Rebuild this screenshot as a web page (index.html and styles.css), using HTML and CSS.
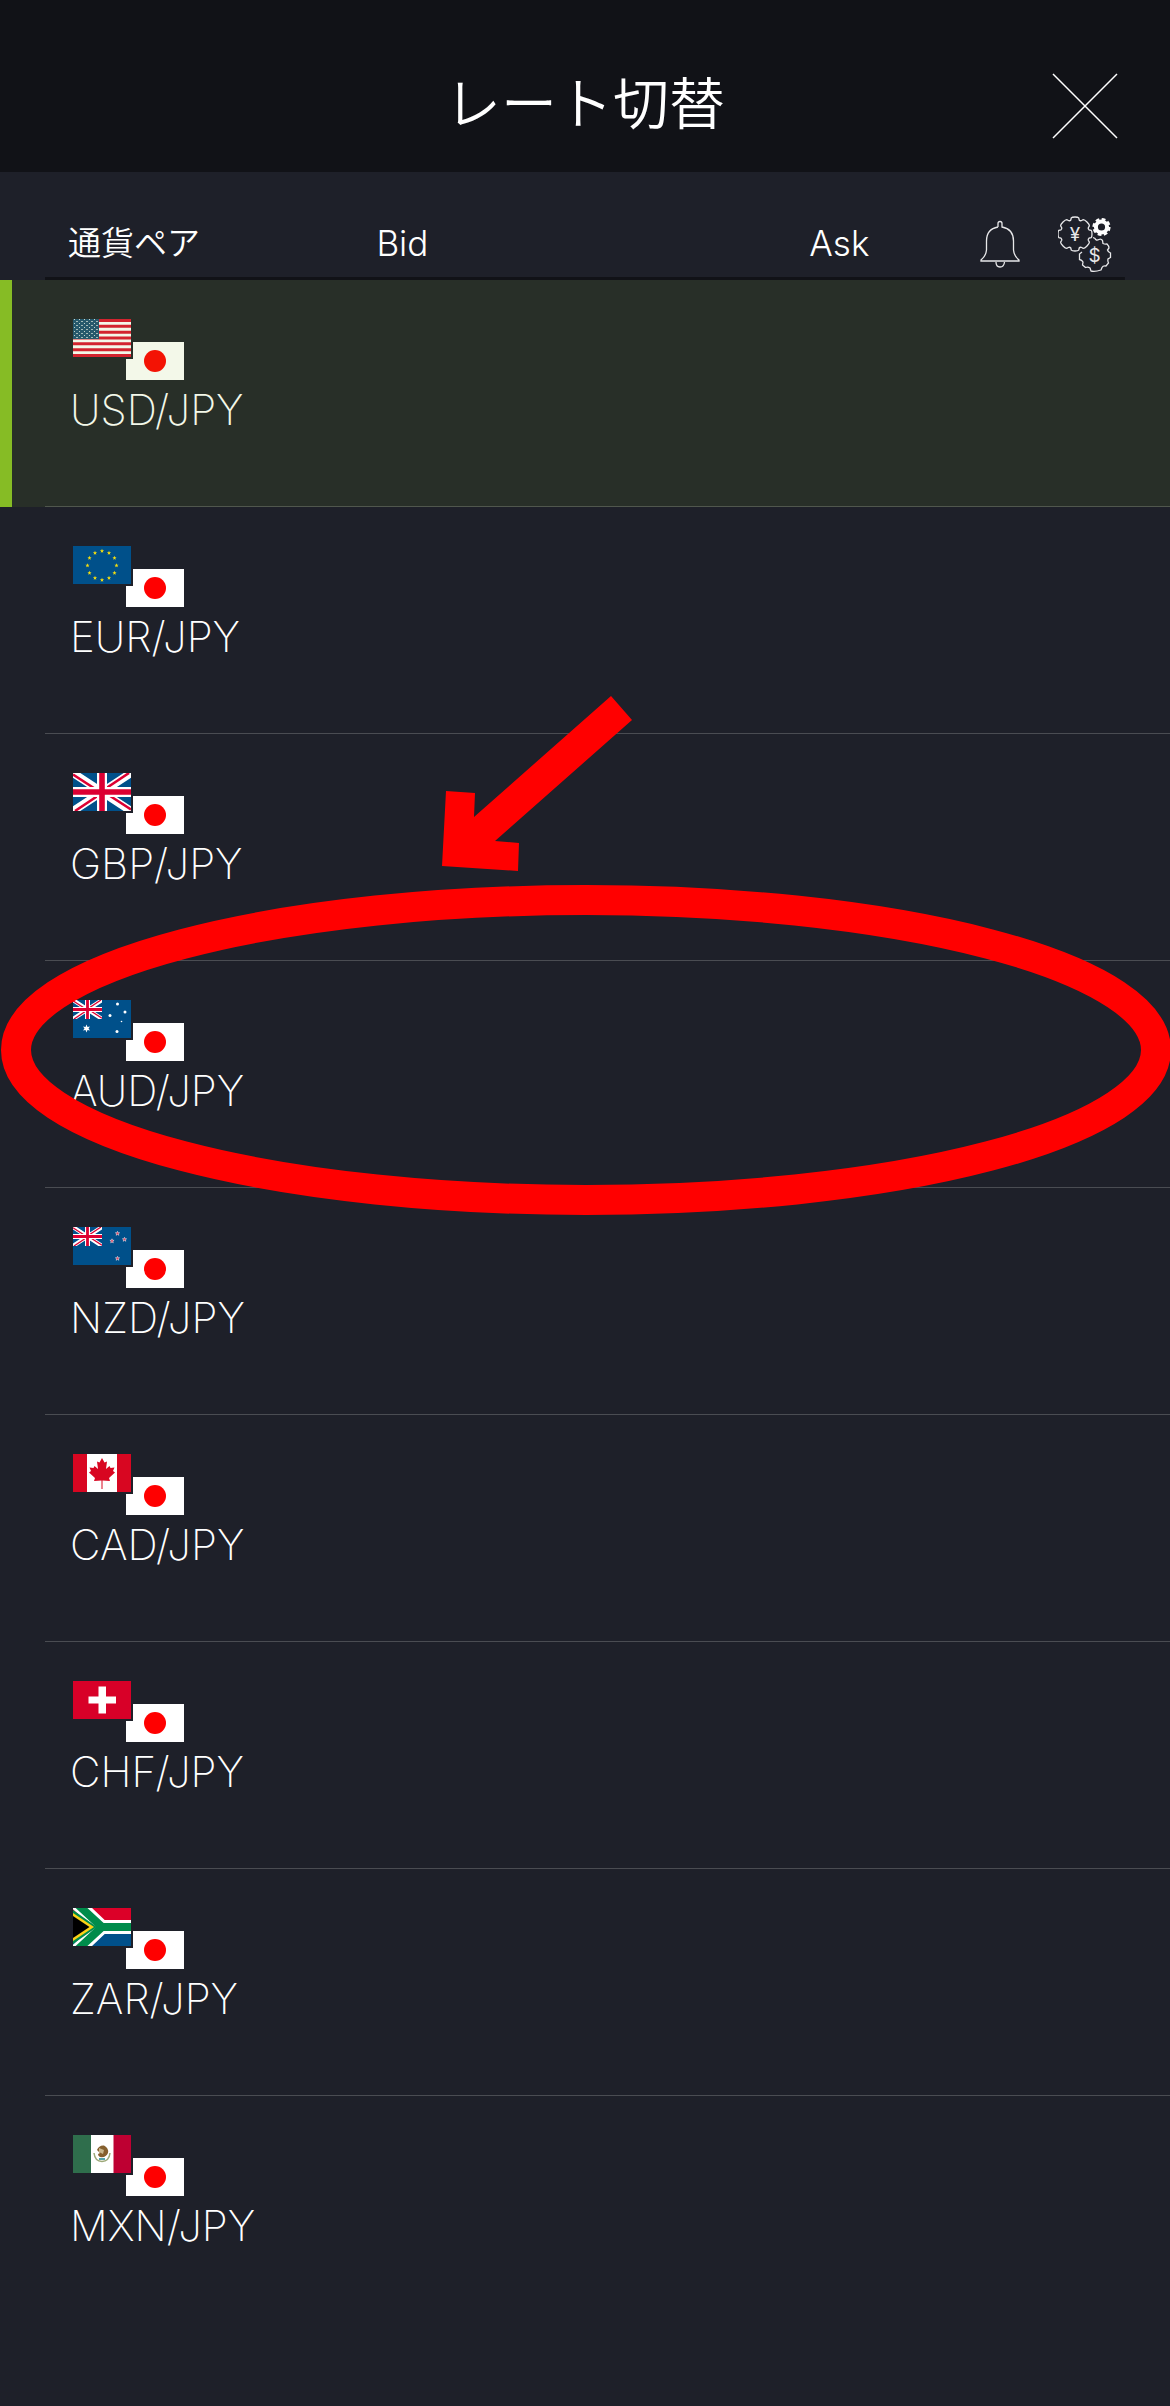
FILE: index.html
```html
<!DOCTYPE html>
<html lang="ja">
<head>
<meta charset="utf-8">
<meta name="viewport" content="width=device-width, initial-scale=1">
<title>レート切替</title>
<link rel="stylesheet" href="styles.css">
</head>
<body>
<svg class="defs" aria-hidden="true">
  <defs>
    <symbol id="jp" viewBox="0 0 58 38"><rect width="58" height="38" fill="#fff"/><circle cx="29" cy="19" r="11" fill="#f00"/></symbol>
    <pattern id="stars" width="5" height="4" patternUnits="userSpaceOnUse"><rect width="5" height="4" fill="#1c4f74"/><rect x="1" y="0" width="1" height="1" fill="#c9d6df"/><rect x="3" y="2" width="2" height="1" fill="#a9bcc9"/></pattern>
    <symbol id="us" viewBox="0 0 58 38">
      <rect width="58" height="38" fill="#fff"/>
      <path d="M0 1.5H58M0 7.3H58M0 13.2H58M0 19H58M0 24.8H58M0 30.7H58M0 36.5H58" stroke="#dc1430" stroke-width="2.9"/>
      <rect width="26" height="20" fill="url(#stars)"/>
    </symbol>
    <path id="star" d="M0-2.2L.6-.7 2.1-.7.9.3 1.3 1.8 0 .9-1.3 1.8-.9.3-2.1-.7-.6-.7Z"/>
    <symbol id="eu" viewBox="0 0 58 38">
      <rect width="58" height="38" fill="#00508a"/>
      <g fill="#f2dc10">
        <use href="#star" x="29" y="5"/><use href="#star" x="36" y="7"/><use href="#star" x="41.500" y="12"/><use href="#star" x="43.500" y="19.500"/><use href="#star" x="41.500" y="27"/><use href="#star" x="36" y="32"/><use href="#star" x="29" y="34"/><use href="#star" x="22" y="32"/><use href="#star" x="16.500" y="27"/><use href="#star" x="14.500" y="19.500"/><use href="#star" x="16.500" y="12"/><use href="#star" x="22" y="7"/>
      </g>
    </symbol>
    <symbol id="gb" viewBox="0 0 58 38">
      <rect width="58" height="38" fill="#00508a"/>
      <path d="M0 0L58 38M58 0L0 38" stroke="#fff" stroke-width="8"/>
      <path d="M0 1.500L27 19M58 36.500L31 19M56 0L29 18M2 38L29 20" stroke="#dc0032" stroke-width="2.600"/>
      <path d="M29 0V38M0 19H58" stroke="#fff" stroke-width="10"/>
      <path d="M29 0V38M0 19H58" stroke="#dc0032" stroke-width="5.600"/>
    </symbol>
    <symbol id="au" viewBox="0 0 58 38">
      <rect width="58" height="38" fill="#00508a"/><use href="#gb" width="29" height="19"/>
      <path d="M13.500 24.500L14.500 27 17 26.500 15.500 28.500 17 30.500 14.500 30 13.500 32.500 12.500 30 10 30.500 11.500 28.500 10 26.500 12.500 27Z" fill="#fff"/>
      <g fill="#fff"><circle cx="44.500" cy="4" r="1.500"/><circle cx="37" cy="15.500" r="1.500"/><circle cx="52" cy="12" r="1.500"/><circle cx="48.500" cy="21.500" r=".8"/><circle cx="44" cy="31.500" r="1.500"/></g>
    </symbol>
    <symbol id="nz" viewBox="0 0 58 38">
      <rect width="58" height="38" fill="#00508a"/><use href="#gb" width="29" height="19"/>
      <g fill="#e0304e" stroke="#fff" stroke-width=".5"><use href="#star" x="44.500" y="6.500"/><use href="#star" x="39" y="14"/><use href="#star" x="51.500" y="12.500"/><use href="#star" x="44.500" y="31.500"/></g>
    </symbol>
    <symbol id="ca" viewBox="0 0 58 38">
      <rect width="58" height="38" fill="#fff"/><path d="M0 0H14V38H0ZM44 0H58V38H44Z" fill="#d80621"/>
      <path d="M29 4L31.500 8.500 34 7.500 33 15 36.500 12 37.500 14 41.500 13.500 40 17 42 18.500 36 24 37 27 29.500 26.500V35H28.500V26.500L21 27 22 24 16 18.500 18 17 16.500 13.500 20.500 14 21.500 12 25 15 24 7.500 26.500 8.500Z" fill="#d80621"/>
    </symbol>
    <symbol id="ch" viewBox="0 0 58 38"><rect width="58" height="38" fill="#d80028"/><path d="M25.500 5.500H33V15.500H43V22.500H33V32.500H25.500V22.500H15.500V15.500H25.500Z" fill="#fff"/></symbol>
    <symbol id="za" viewBox="0 0 58 38">
      <rect width="58" height="19" fill="#dc0028"/><rect y="19" width="58" height="19" fill="#00508a"/>
      <path d="M3-5.500L29 19H58M3 43.500L29 19" fill="none" stroke="#fff" stroke-width="14"/>
      <path d="M1-7L29 19H58M1 45L29 19" fill="none" stroke="#008c4b" stroke-width="8"/>
      <path d="M0 2L24 19 0 36Z" fill="#008c4b"/>
      <path d="M0 5L21 19 0 33Z" fill="#fcd116"/><path d="M0 8L16.500 19 0 30Z" fill="#000"/>
    </symbol>
    <symbol id="mx" viewBox="0 0 58 38">
      <rect width="58" height="38" fill="#fff"/><rect width="18" height="38" fill="#2f6e4c"/><rect x="40.500" width="17.500" height="38" fill="#be0032"/>
      <path d="M21 18Q22 26.500 29 26.500T37 18" fill="none" stroke="#9ca878" stroke-width="1.500"/>
      <path d="M24 15Q26 10 31 10.500 36 13 35 18 33 23 27 22 23 19 27 18Z" fill="#86602f"/><path d="M26 13L31 15 30 19 26 17Z" fill="#c9b68c"/><path d="M26 24H32" stroke="#53a4ac" stroke-width="2"/>
    </symbol>
    <path id="gear" d="M16.100-3.700Q17-3 17 0T16.100 3.700L14 4.200Q13 5 13.300 6.200L14.400 8.200Q14.500 9.500 12 12T8.200 14.400L6.200 13.300Q5 13 4.200 14L3.700 16.100Q3 17 0 17T-3.700 16.100L-4.200 14Q-5 13-6.200 13.300L-8.200 14.400Q-9.500 14.500-12 12T-14.400 8.200L-13.300 6.200Q-13 5-14 4.200L-16.100 3.700Q-17 3-17 0T-16.100-3.700L-14-4.200Q-13-5-13.300-6.200L-14.400-8.200Q-14.500-9.500-12-12T-8.200-14.400L-6.200-13.300Q-5-13-4.200-14L-3.700-16.100Q-3-17 0-17T3.700-16.100L4.200-14Q5-13 6.200-13.300L8.200-14.400Q9.500-14.500 12-12T14.400-8.200L13.300-6.200Q13-5 14-4.200Z"/>
  </defs>
</svg>

<header class="bar">
  <h1 class="bar-title">レート切替</h1>
  <button class="icon-button close" type="button" aria-label="閉じる">
    <svg width="66" height="66" viewBox="0 0 66 66" fill="none" stroke="#fff" stroke-width="1.500"><path d="M1 1L65 65M65 1L1 65"/></svg>
  </button>
</header>

<main class="board">
  <table class="rates">
    <colgroup><col class="col-pair"><col class="col-bid"><col class="col-ask"><col class="col-tools"></colgroup>
    <thead>
      <tr>
        <th class="pair-heading" scope="col">通貨ペア</th>
        <th scope="col">Bid</th>
        <th scope="col">Ask</th>
        <td>
          <div class="tools">
            <button class="icon-button" type="button" aria-label="アラート">
              <svg width="40" height="48" viewBox="0 0 40 48" fill="none" stroke="#e8e8ea" stroke-width="1.300"><path d="M18 7V3.500Q18 1.500 20 1.500T22 3.500V7Q33.500 9 33.500 21V30Q34 36 39 40V41H1V40Q6 36 6.500 30V21Q6.500 9 18 7M16 42Q16 47 20 47T24.500 42"/></svg>
            </button>
            <button class="icon-button" type="button" aria-label="通貨設定">
              <svg width="54" height="56" viewBox="0 0 54 56" fill="none" stroke="#e8e8ea" stroke-width="1.300">
                <use href="#gear" x="17" y="18"/>
                <path d="M35 21.500L37 22.500Q38 25 41 23.500 43 22.500 44.500 24.500L45 27.500Q47 28.500 49 28 51 30 51 32L49.500 34Q50 36 52.500 37V41.500L50 43Q49.500 45 50.500 47L48 50Q45 49.500 44 51.500L43 54Q37 56 33 55L32 52Q30 50.500 27.500 51.500L24.500 49 25 46Q24 44 21.500 43.500V38L24 36"/>
                <circle cx="43.500" cy="11" r="5.600" stroke="#fff" stroke-width="4"/><circle cx="43.500" cy="11" r="8" stroke="#fff" stroke-width="2.200" stroke-dasharray="3.800 2.480"/>
                <text class="coin" x="17" y="25">¥</text><text class="coin" x="36.500" y="46">$</text>
              </svg>
            </button>
          </div>
        </td>
      </tr>
    </thead>
    <tbody>
      <tr class="selected"><th scope="row"><button class="pair" type="button"><span class="flags"><svg class="flag base"><use href="#us"/></svg><svg class="flag quote"><use href="#jp"/></svg></span><span class="name">USD/JPY</span></button></th><td></td><td></td><td></td></tr>
      <tr><th scope="row"><button class="pair" type="button"><span class="flags"><svg class="flag base"><use href="#eu"/></svg><svg class="flag quote"><use href="#jp"/></svg></span><span class="name">EUR/JPY</span></button></th><td></td><td></td><td></td></tr>
      <tr><th scope="row"><button class="pair" type="button"><span class="flags"><svg class="flag base"><use href="#gb"/></svg><svg class="flag quote"><use href="#jp"/></svg></span><span class="name">GBP/JPY</span></button></th><td></td><td></td><td></td></tr>
      <tr><th scope="row"><button class="pair" type="button"><span class="flags"><svg class="flag base"><use href="#au"/></svg><svg class="flag quote"><use href="#jp"/></svg></span><span class="name">AUD/JPY</span></button></th><td></td><td></td><td></td></tr>
      <tr><th scope="row"><button class="pair" type="button"><span class="flags"><svg class="flag base"><use href="#nz"/></svg><svg class="flag quote"><use href="#jp"/></svg></span><span class="name">NZD/JPY</span></button></th><td></td><td></td><td></td></tr>
      <tr><th scope="row"><button class="pair" type="button"><span class="flags"><svg class="flag base"><use href="#ca"/></svg><svg class="flag quote"><use href="#jp"/></svg></span><span class="name">CAD/JPY</span></button></th><td></td><td></td><td></td></tr>
      <tr><th scope="row"><button class="pair" type="button"><span class="flags"><svg class="flag base"><use href="#ch"/></svg><svg class="flag quote"><use href="#jp"/></svg></span><span class="name">CHF/JPY</span></button></th><td></td><td></td><td></td></tr>
      <tr><th scope="row"><button class="pair" type="button"><span class="flags"><svg class="flag base"><use href="#za"/></svg><svg class="flag quote"><use href="#jp"/></svg></span><span class="name">ZAR/JPY</span></button></th><td></td><td></td><td></td></tr>
      <tr><th scope="row"><button class="pair" type="button"><span class="flags"><svg class="flag base"><use href="#mx"/></svg><svg class="flag quote"><use href="#jp"/></svg></span><span class="name">MXN/JPY</span></button></th><td></td><td></td><td></td></tr>
    </tbody>
  </table>
  <svg class="callout" viewBox="0 0 1170 540" aria-hidden="true">
    <path d="M611 16L632 40 495 161 519 163 518 191 442 186 446 111 475 113 474 137Z" fill="#f00"/>
    <ellipse cx="586" cy="370" rx="570" ry="150" fill="none" stroke="#f00" stroke-width="30"/>
  </svg>
</main>
</body>
</html>
```

FILE: styles.css
```css
:root {
  --page: #1e2029;
  --bar: #111217;
  --line: #4a4c52;
  --accent: #86bc25;
}

* {
  box-sizing: border-box;
}

body {
  margin: 0;
  background: var(--page);
  color: #fff;
  font-family: Inter, "Noto Sans CJK JP", sans-serif;
  font-weight: 300;
}

.defs {
  position: absolute;
  width: 0;
  height: 0;
}

.icon-button {
  padding: 0;
  border: 0;
  background: none;
  color: inherit;
}

.icon-button svg {
  display: block;
}

.bar {
  display: grid;
  grid-template-columns: 1fr auto 1fr;
  align-items: center;
  padding: 64px 52px 28px;
  background: var(--bar);
}

.bar-title {
  grid-column: 2;
  margin: 0;
  font-size: 56px;
  line-height: 80px;
  font-weight: 350;
}

.close {
  justify-self: end;
  padding-top: 3px;
}

.board {
  position: relative;
}

.rates {
  width: 100%;
  table-layout: fixed;
  border-collapse: collapse;
}

.col-pair {
  width: 32%;
}

.col-bid {
  width: 37%;
}

.col-ask {
  width: 14%;
}

.col-tools {
  width: 17%;
}

.rates th,
.rates td {
  padding: 0;
  font-weight: inherit;
  text-align: left;
}

.rates thead tr {
  height: 108px;
  background: linear-gradient(var(--bar), var(--bar)) no-repeat 45px 100% / calc(100% - 90px) 3px;
}

.rates thead th {
  padding: 34px 0 0 2px;
  font-size: 35px;
  line-height: 36px;
}

.rates thead .pair-heading {
  padding-left: 68px;
  font-size: 33px;
  font-weight: 350;
}

.tools {
  display: flex;
  justify-content: flex-end;
  align-items: center;
  gap: 38px;
  padding: 36px 58px 0 0;
}

.coin {
  fill: #e8e8ea;
  stroke: none;
  font-family: Inter, sans-serif;
  font-size: 19px;
  text-anchor: middle;
}

.rates tbody tr {
  position: relative;
  height: 227px;
  background: linear-gradient(var(--line), var(--line)) no-repeat 45px 100% / 100% 1px;
}

.rates tbody tr:last-child {
  background: none;
}

.rates tbody th {
  vertical-align: top;
}

.selected th::after {
  content: "";
  position: absolute;
  inset: 0;
  z-index: 1;
  border-left: 12px solid var(--accent);
  background: rgba(134, 188, 37, 0.1);
  pointer-events: none;
}

.pair {
  display: block;
  width: 100%;
  padding: 39px 0 0 70px;
  border: 0;
  background: none;
  color: inherit;
  font: inherit;
  text-align: left;
}

.flags {
  display: flex;
  align-items: flex-start;
  padding-left: 3px;
}

.flag {
  flex: none;
  width: 58px;
  height: 38px;
}

.base {
  position: relative;
  z-index: 1;
  box-shadow: 2px 2px 0 var(--page);
}

.quote {
  margin: 23px 0 0 -5px;
}

.name {
  display: block;
  padding-top: 4px;
  font-size: 42px;
  line-height: 52px;
  font-weight: 200;
}

.callout {
  position: absolute;
  top: 508px;
  left: 0;
  z-index: 2;
  width: 100%;
  pointer-events: none;
}
```
